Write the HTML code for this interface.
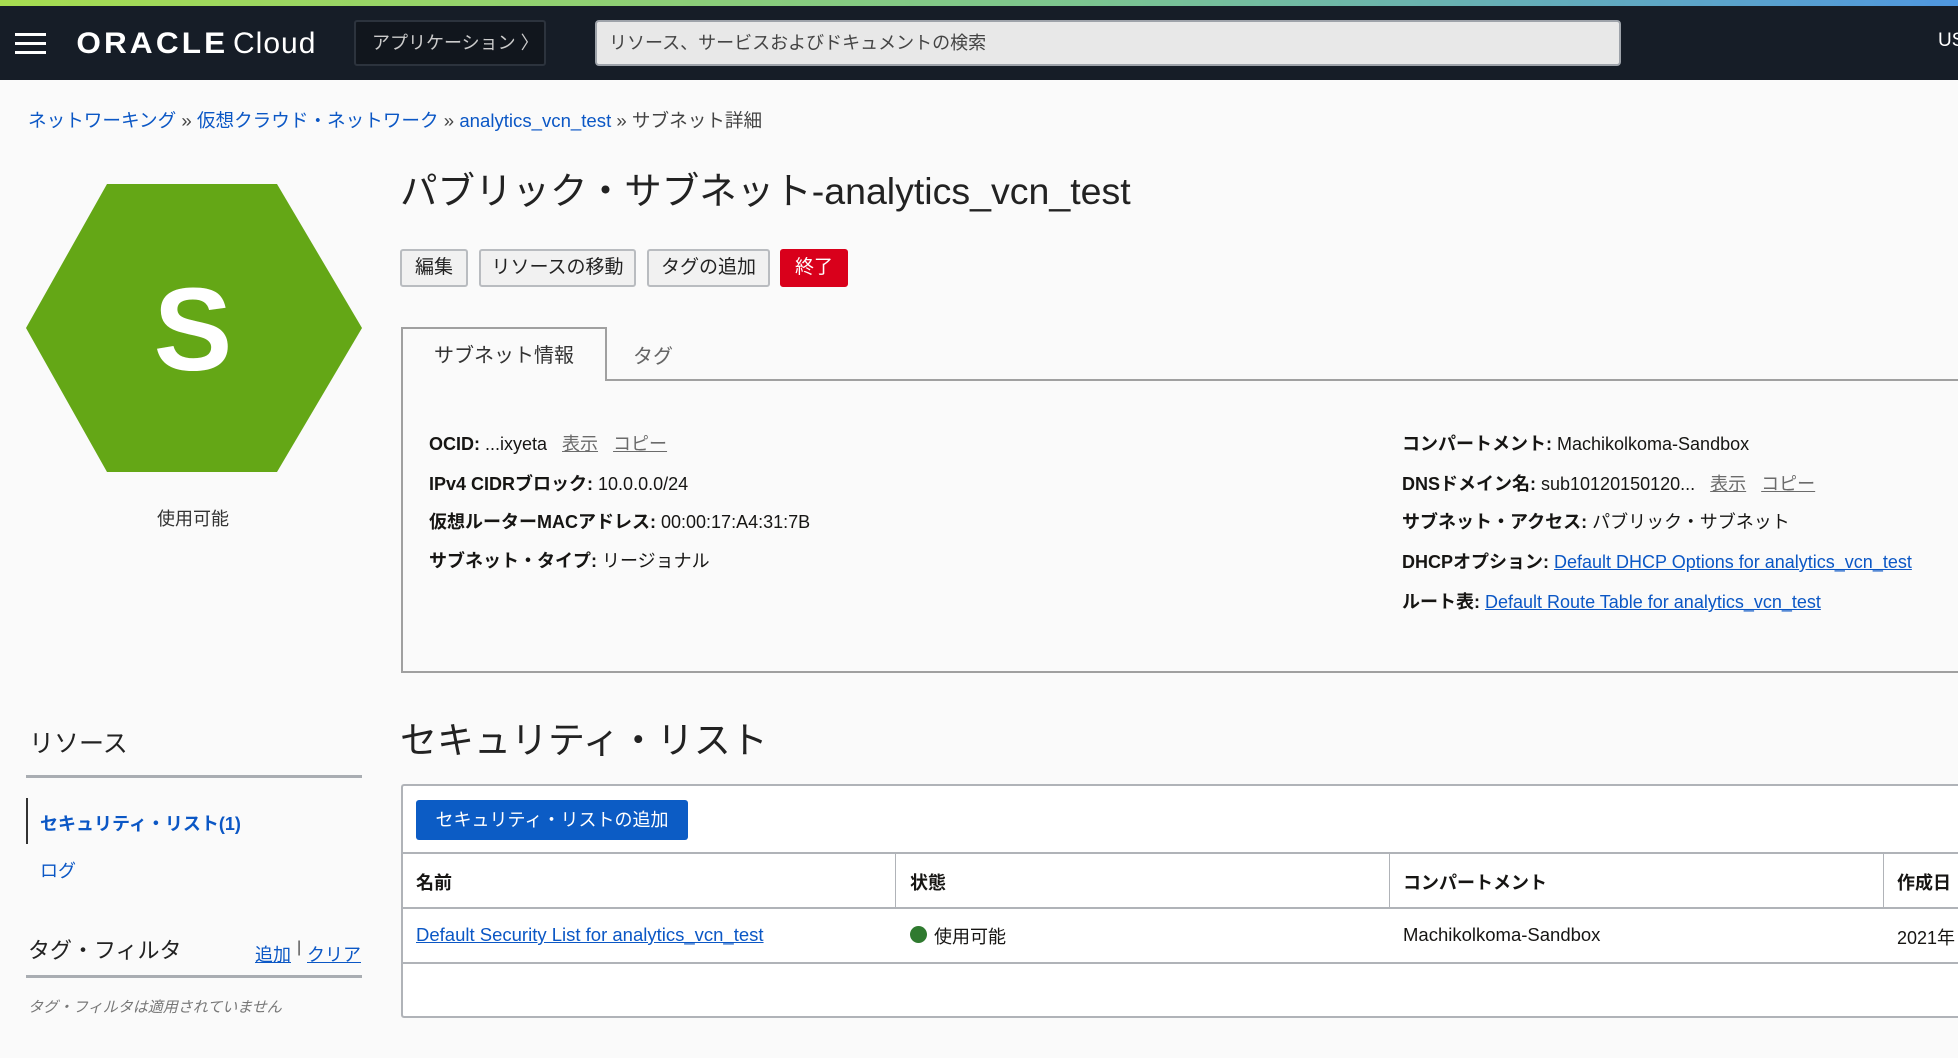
<!DOCTYPE html>
<html><head><meta charset="utf-8"><style>
*{box-sizing:border-box;margin:0;padding:0}
body{width:1958px;height:1058px;overflow:hidden;background:#fafafa;font-family:"Liberation Sans","Noto Sans CJK JP",sans-serif;color:#161513;position:relative}
.a{position:absolute;white-space:nowrap}
a,.lk{color:#0b57c5}
.u{text-decoration:underline}
.btn{position:absolute;top:249px;height:38px;border:2px solid #b9bcc0;border-radius:3px;background:#f1f1f1;font-size:19px;line-height:34px;text-align:center;color:#222}
.row{position:absolute;font-size:18px;white-space:nowrap}
.row b{font-weight:bold}
.g{color:#6b6b6b;text-decoration:underline;margin-left:10px}
</style></head><body>
<div class="a" style="left:0;top:0;width:1958px;height:6px;background:linear-gradient(90deg,#a6dc50,#7cc58f 55%,#4f97e0)"></div>
<div class="a" style="left:0;top:6px;width:1958px;height:74px;background:#161d27"></div>
<div class="a" style="left:15px;top:33px;width:31px;height:3px;background:#fff;box-shadow:0 9px 0 #fff,0 18px 0 #fff"></div>
<div class="a" style="left:80px;top:25px;color:#fff;font-size:30px;line-height:38px"><span style="font-weight:bold;letter-spacing:3px;transform:scaleX(1.05);display:inline-block">ORACLE</span> <span style="letter-spacing:1px">Cloud</span></div>
<div class="a" style="left:354px;top:20px;width:192px;height:46px;border:2px solid #2c333d;border-radius:3px;background:#11161d;color:#ccc;font-size:18px;line-height:42px;padding-left:16px">アプリケーション 〉</div>
<div class="a" style="left:595px;top:20px;width:1026px;height:46px;border:2px solid #9ea3aa;border-radius:4px;background:#e8e8e8;color:#444;font-size:18px;line-height:42px;padding-left:12px">リソース、サービスおよびドキュメントの検索</div>
<div class="a" style="left:1938px;top:30px;color:#fff;font-size:19px">US</div>

<div class="a" style="left:28px;top:106px;font-size:18.6px;color:#444"><span class="lk">ネットワーキング</span> » <span class="lk">仮想クラウド・ネットワーク</span> » <span class="lk">analytics_vcn_test</span> » サブネット詳細</div>

<svg class="a" style="left:0;top:0" width="400" height="500"><polygon points="107,184 277,184 362,328 277,472 107,472 26,328" fill="#64a716"/><text x="193" y="370" font-family="Liberation Sans" font-weight="bold" font-size="118" fill="#fff" text-anchor="middle">S</text></svg>
<div class="a" style="left:157px;top:505px;font-size:18px;color:#333">使用可能</div>

<div class="a" style="left:400px;top:160px;font-size:37.5px;color:#222">パブリック・サブネット-analytics_vcn_test</div>
<div class="btn" style="left:400px;width:68px">編集</div>
<div class="btn" style="left:479px;width:157px">リソースの移動</div>
<div class="btn" style="left:647px;width:123px">タグの追加</div>
<div class="btn" style="left:780px;width:68px;background:#d9001b;border-color:#d9001b;color:#fff">終了</div>

<div class="a" style="left:401px;top:379px;width:1557px;height:294px;border:2px solid #a0a0a0;border-right:none;background:#fafafa"></div>
<div class="a" style="left:401px;top:327px;width:206px;height:54px;border:2px solid #a0a0a0;border-bottom:none;background:#fafafa;font-size:20px;line-height:54px;text-align:center;color:#333">サブネット情報</div>
<div class="a" style="left:633px;top:340px;font-size:20px;color:#666">タグ</div>

<div class="row" style="left:429px;top:430px"><b>OCID:</b> ...ixyeta <span class="g">表示</span> <span class="g">コピー</span></div>
<div class="row" style="left:429px;top:470px"><b>IPv4 CIDRブロック:</b> 10.0.0.0/24</div>
<div class="row" style="left:429px;top:508px"><b>仮想ルーターMACアドレス:</b> 00:00:17:A4:31:7B</div>
<div class="row" style="left:429px;top:547px"><b>サブネット・タイプ:</b> リージョナル</div>
<div class="row" style="left:1402px;top:430px"><b>コンパートメント:</b> Machikolkoma-Sandbox</div>
<div class="row" style="left:1402px;top:470px"><b>DNSドメイン名:</b> sub10120150120... <span class="g">表示</span> <span class="g">コピー</span></div>
<div class="row" style="left:1402px;top:508px"><b>サブネット・アクセス:</b> パブリック・サブネット</div>
<div class="row" style="left:1402px;top:548px"><b>DHCPオプション:</b> <span class="lk u">Default DHCP Options for analytics_vcn_test</span></div>
<div class="row" style="left:1402px;top:588px"><b>ルート表:</b> <span class="lk u">Default Route Table for analytics_vcn_test</span></div>

<div class="a" style="left:400px;top:710px;font-size:37px;color:#222">セキュリティ・リスト</div>
<div class="a" style="left:29px;top:724px;font-size:25px;color:#222">リソース</div>
<div class="a" style="left:26px;top:775px;width:336px;height:3px;background:#a9adb2"></div>
<div class="a" style="left:26px;top:798px;width:2px;height:46px;background:#333"></div>
<div class="a lk" style="left:40px;top:810px;font-size:18px;font-weight:bold">セキュリティ・リスト(1)</div>
<div class="a lk" style="left:40px;top:857px;font-size:18px">ログ</div>
<div class="a" style="left:28px;top:933px;font-size:22px;color:#222">タグ・フィルタ</div>
<div class="a lk u" style="left:255px;top:941px;font-size:18px">追加</div>
<div class="a" style="left:297px;top:939px;font-size:16px;color:#444">|</div>
<div class="a lk u" style="left:307px;top:941px;font-size:18px">クリア</div>
<div class="a" style="left:26px;top:975px;width:336px;height:3px;background:#a9adb2"></div>
<div class="a" style="left:28px;top:996px;font-size:15px;font-style:italic;color:#777">タグ・フィルタは適用されていません</div>

<div class="a" style="left:401px;top:784px;width:1557px;height:234px;border:2px solid #b0b3b8;border-right:none;border-radius:3px 0 0 3px;background:#fff"></div>
<div class="a" style="left:416px;top:800px;width:272px;height:40px;background:#0c5cc5;border-radius:3px;color:#fff;font-size:18px;line-height:40px;text-align:center">セキュリティ・リストの追加</div>
<div class="a" style="left:403px;top:852px;width:1555px;height:2px;background:#b0b3b8"></div>
<div class="a" style="left:403px;top:907px;width:1555px;height:2px;background:#b0b3b8"></div>
<div class="a" style="left:403px;top:962px;width:1555px;height:2px;background:#b0b3b8"></div>
<div class="a" style="left:895px;top:854px;width:1px;height:53px;background:#b0b3b8"></div>
<div class="a" style="left:1389px;top:854px;width:1px;height:53px;background:#b0b3b8"></div>
<div class="a" style="left:1883px;top:854px;width:1px;height:53px;background:#b0b3b8"></div>
<div class="a" style="left:416px;top:869px;font-size:18px;font-weight:bold">名前</div>
<div class="a" style="left:910px;top:869px;font-size:18px;font-weight:bold">状態</div>
<div class="a" style="left:1403px;top:869px;font-size:18px;font-weight:bold">コンパートメント</div>
<div class="a" style="left:1897px;top:869px;font-size:18px;font-weight:bold">作成日</div>
<div class="a lk u" style="left:416px;top:924px;font-size:18.5px">Default Security List for analytics_vcn_test</div>
<div class="a" style="left:910px;top:926px;width:17px;height:17px;border-radius:50%;background:#2f7a2f"></div>
<div class="a" style="left:934px;top:923px;font-size:18px">使用可能</div>
<div class="a" style="left:1403px;top:924px;font-size:18.5px">Machikolkoma-Sandbox</div>
<div class="a" style="left:1897px;top:924px;font-size:18px">2021年</div>
</body></html>
